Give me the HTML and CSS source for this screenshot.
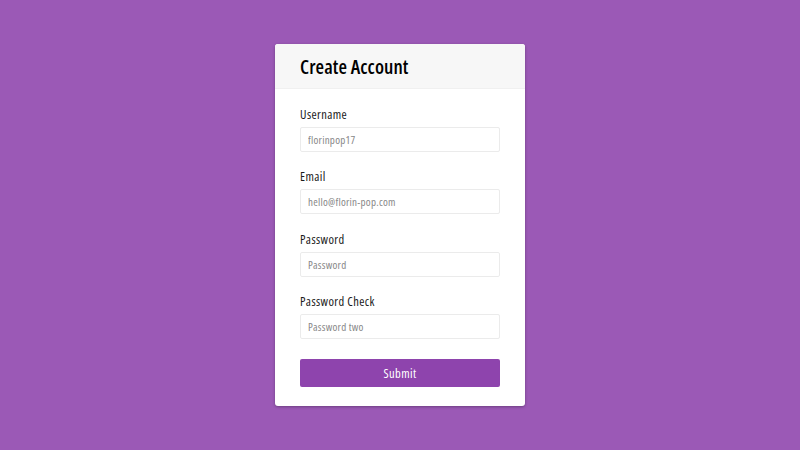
FILE: index.html
```html
<!DOCTYPE html>
<html lang="en">
<head>
<meta charset="utf-8">
<title>Create Account</title>
<link rel="stylesheet" href="styles.css">
</head>
<body>
<div class="container">
  <div class="header"><h2>Create Account</h2></div>
  <form class="form">
    <div class="form-control">
      <label for="username">Username</label>
      <input type="text" id="username" placeholder="florinpop17">
    </div>
    <div class="form-control">
      <label for="email">Email</label>
      <input type="email" id="email" placeholder="hello@florin-pop.com">
    </div>
    <div class="form-control">
      <label for="password">Password</label>
      <input type="password" id="password" placeholder="Password">
    </div>
    <div class="form-control">
      <label for="password2">Password Check</label>
      <input type="password" id="password2" placeholder="Password two">
    </div>
    <button type="button" class="submit">Submit</button>
  </form>
</div>
</body>
</html>
```
FILE: styles.css
```css
* { box-sizing: border-box; }
html, body { margin: 0; padding: 0; }
body {
  background-color: #9b59b6;
  font-family: "Open Sans", "Noto Sans", sans-serif;
  font-stretch: 75%;
  display: flex;
  align-items: center;
  justify-content: center;
  height: 100vh;
}
.container {
  background-color: #fff;
  border-radius: 3px;
  box-shadow: 0 1px 3px rgba(0, 0, 0, 0.3);
  overflow: hidden;
  width: 250px;
}
.header {
  border-bottom: 1px solid #f0f0f0;
  background-color: #f7f7f7;
  padding: 12px 25px 10px;
}
.header h2 {
  margin: 0;
  font-size: 19.5px;
  line-height: 22px;
  font-weight: 650;
  letter-spacing: 0.1px;
  color: #000;
}
.form {
  padding: 17.5px 25px 18.5px;
}
.form-control {
  margin-bottom: 17.5px;
}
.form-control label {
  display: block;
  font-size: 12.5px;
  line-height: 16px;
  letter-spacing: 0.4px;
  margin-bottom: 4px;
  color: #1a1a1a;
}
.form-control input {
  display: block;
  width: 100%;
  height: 25px;
  border: 1px solid #ebebeb;
  border-radius: 2px;
  padding: 0 7px;
  font-family: inherit;
  font-stretch: inherit;
  font-size: 11px;
  letter-spacing: 0.25px;
  color: #333;
  outline: none;
}
.form-control input::placeholder { color: #888; }
.submit {
  display: block;
  width: 100%;
  height: 28px;
  margin-top: 20px;
  background-color: #8e44ad;
  border: none;
  border-radius: 2px;
  color: #fff;
  font-family: inherit;
  font-stretch: inherit;
  font-size: 12.5px;
  letter-spacing: 0.4px;
  padding: 0;
}
```
